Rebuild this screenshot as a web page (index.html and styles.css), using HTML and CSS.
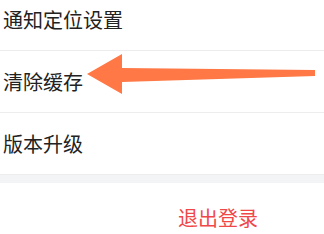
FILE: index.html
```html
<!DOCTYPE html>
<html lang="zh-CN">
<head>
    <meta charset="UTF-8">
    <meta name="viewport" content="width=device-width, initial-scale=1.0">
    <title>设置</title>
    <link rel="stylesheet" href="styles.css">
</head>
<body>
    <div class="settings">
        <div class="list">
            <div class="row">通知定位设置</div>
            <div class="row">清除缓存</div>
            <div class="row">版本升级</div>
        </div>
        <div class="gap"></div>
        <div class="logout">退出登录</div>
        <svg class="arrow" width="324" height="234" viewBox="0 0 324 234">
            <polygon points="87,74 122,54 122,68 315,70 315,76 122,82 122,94" fill="#ff7845"/>
        </svg>
    </div>
</body>
</html>
```

FILE: styles.css
```css
body {
    margin: 0;
    padding: 0;
    background-color: #fff;
    font-family: "Noto Sans CJK SC", "Noto Sans", sans-serif;
    overflow: hidden;
}
.settings {
    position: relative;
    width: 324px;
    height: 234px;
    overflow: hidden;
}
.list {
    margin-top: -11px;
}
.row {
    height: 61px;
    display: flex;
    align-items: center;
    padding-left: 3px;
    font-size: 20px;
    color: #222;
    border-bottom: 1px solid #ededed;
}
.gap {
    height: 8px;
    background-color: #f3f4f6;
}
.logout {
    height: 68px;
    display: flex;
    align-items: center;
    padding-left: 178px;
    font-size: 20px;
    color: #f04848;
}
.arrow {
    position: absolute;
    left: 0;
    top: 0;
}
```
